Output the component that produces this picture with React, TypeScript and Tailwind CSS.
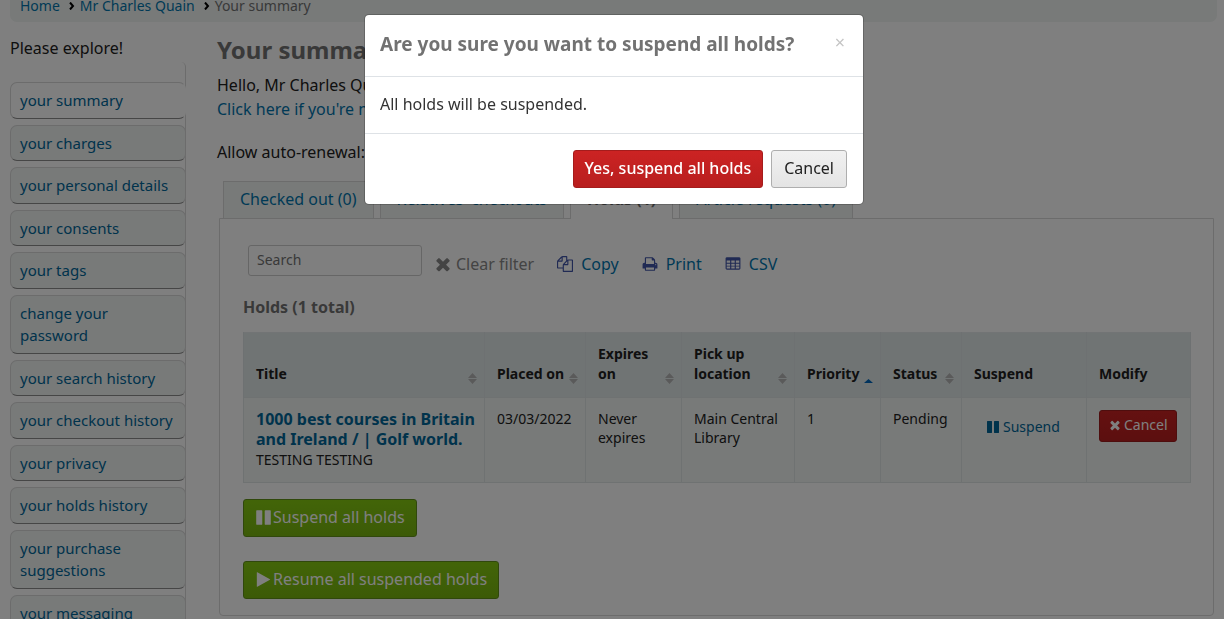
import { FC, ReactNode } from 'react';

interface IconProps {
  path: string;
  className: string;
}

const iconPaths = {
  times: 'M1490 1322q0 40-28 68l-136 136q-28 28-68 28t-68-28l-294-294-294 294q-28 28-68 28t-68-28l-136-136q-28-28-28-68t28-68l294-294-294-294q-28-28-28-68t28-68l136-136q28-28 68-28t68 28l294 294 294-294q28-28 68-28t68 28l136 136q28 28 28 68t-28 68l-294 294 294 294q28 28 28 68z',
  copy: 'M1696 384q40 0 68 28t28 68v1216q0 40-28 68t-68 28h-960q-40 0-68-28t-28-68v-288h-544q-40 0-68-28t-28-68v-672q0-40 20-88t48-76l408-408q28-28 76-48t88-20h416q40 0 68 28t28 68v328q68-40 128-40h416zm-544 213l-299 299h299v-299zm-640-384l-299 299h299v-299zm196 647l316-316v-416h-384v416q0 40-28 68t-68 28h-416v640h512v-256q0-40 20-88t48-76zm956 804v-1152h-384v416q0 40-28 68t-68 28h-416v640h896z',
  print: 'M448 1536h896v-256h-896v256zm0-640h896v-384h-160q-40 0-68-28t-28-68v-160h-640v640zm1152 64q0-26-19-45t-45-19-45 19-19 45 19 45 45 19 45-19 19-45zm128 0v416q0 13-9.5 22.5t-22.5 9.5h-224v160q0 40-28 68t-68 28h-960q-40 0-68-28t-28-68v-160h-224q-13 0-22.5-9.5t-9.5-22.5v-416q0-79 56.5-135.5t135.5-56.5h64v-544q0-40 28-68t68-28h672q40 0 88 20t76 48l152 152q28 28 48 76t20 88v256h64q79 0 135.5 56.5t56.5 135.5z',
  table: 'M224 128h1344q66 0 113 47t47 113v1088q0 66-47 113t-113 47h-1344q-66 0-113-47t-47-113v-1088q0-66 47-113t113-47zM192 512v256h384v-256zM704 512v256h384v-256zM1216 512v256h384v-256zM192 864v224h384v-224zM704 864v224h384v-224zM1216 864v224h384v-224zM192 1184v224h384v-224zM704 1184v224h384v-224zM1216 1184v224h384v-224z',
  pause: 'M1664 192v1408q0 26-19 45t-45 19h-512q-26 0-45-19t-19-45v-1408q0-26 19-45t45-19h512q26 0 45 19t19 45zm-896 0v1408q0 26-19 45t-45 19h-512q-26 0-45-19t-19-45v-1408q0-26 19-45t45-19h512q26 0 45 19t19 45z',
  play: 'M1576 927l-1328 738q-23 13-39.5 3t-16.5-36v-1472q0-26 16.5-36t39.5 3l1328 738q23 13 23 31t-23 31z',
};

const Icon: FC<IconProps> = ({ path, className }) => (
  <svg viewBox="0 0 1792 1792" className={className} fill="currentColor" fillRule="evenodd" aria-hidden="true">
    <path d={path} />
  </svg>
);

const menuItems = [
  'your summary',
  'your charges',
  'your personal details',
  'your consents',
  'your tags',
  'change your password',
  'your search history',
  'your checkout history',
  'your privacy',
  'your holds history',
  'your purchase suggestions',
  'your messaging',
];

const tabs = ['Checked out (0)', "Relatives' checkouts", 'Holds (1)', 'Article requests (0)'];

const columns = [
  { label: 'Title', width: 'w-[241px]', sort: 'both' },
  { label: 'Placed on', width: 'w-[101px]', sort: 'both' },
  { label: 'Expires on', width: 'w-[96px]', sort: 'both' },
  { label: 'Pick up location', width: 'w-[113px]', sort: 'both' },
  { label: 'Priority', width: 'w-[86px]', sort: 'asc' },
  { label: 'Status', width: 'w-[81px]', sort: 'both' },
  { label: 'Suspend', width: 'w-[125px]', sort: '' },
  { label: 'Modify', width: 'w-[104px]', sort: '' },
];

const Breadcrumbs: FC = () => (
  <nav aria-label="Breadcrumb" className="ml-2.5 mr-[7px] rounded-b-[7px] bg-[#f0f4f2] px-2.5 pb-2.5">
    <ol className="flex items-center text-sm leading-3">
      <li><a href="#home" className="text-[#0174ad]">Home</a></li>
      <Chevron />
      <li><a href="#patron" className="text-[#0174ad]">Mr Charles Quain</a></li>
      <Chevron />
      <li className="text-[#727272]" aria-current="page">Your summary</li>
    </ol>
  </nav>
);

const Chevron: FC = () => (
  <li aria-hidden="true" className="flex w-5 justify-center pl-1">
    <svg viewBox="0 0 6 8" className="h-2 w-1.5" fill="none" stroke="#000" strokeWidth="2">
      <path d="M1 0.5L4 4L1 7.5" />
    </svg>
  </li>
);

const Sidebar: FC = () => (
  <aside className="w-44 shrink-0">
    <p className="pt-3.5">Please explore!</p>
    <ul className="mt-0.5 flex flex-col gap-1.5 rounded-tr-[5px] border-r border-[#d8d8d8] pt-5 text-[15px] leading-normal">
      {menuItems.map((item, index) => (
        <li key={item} className="-mr-px">
          <a
            href="#menu"
            className={
              index === 0
                ? 'block rounded-[7px] border border-[#d8d8d8] border-r-white border-b-[#8c8c8c] bg-white px-[9px] py-1.5 text-[#006699]'
                : 'block rounded-[7px] border border-[#d8d8d8] border-b-[#8c8c8c] bg-[#f0f4f2] px-[9px] py-1.5 text-[#006699]'
            }
          >
            {item}
          </a>
        </li>
      ))}
    </ul>
  </aside>
);

const SortIcon: FC<{ sort: string }> = ({ sort }) => (
  <svg viewBox="0 0 9 11" className="h-[11px] w-[9px] shrink-0" aria-hidden="true">
    {sort === 'both' && <path d="M4.5 0L9 5H0zM0 6H9L4.5 11z" fill="#b4b4b4" />}
    {sort === 'asc' && <path d="M4.5 6L9 10H0z" fill="#0066bb" />}
  </svg>
);

const HoldsTable: FC = () => (
  <table className="w-full table-fixed border-collapse border border-[#e4e9ea] text-sm">
    <thead>
      <tr className="bg-[#e1e8e9]">
        {columns.map(({ label, width, sort }) => (
          <th key={label} className={`${width} border-x border-[#dde3e4] pt-[11px] pr-[7px] pb-[13px] pl-3 text-left align-bottom font-bold leading-5`}>
            <div className="flex items-end justify-between">
              <span>{label}</span>
              {sort && <SortIcon sort={sort} />}
            </div>
          </th>
        ))}
      </tr>
    </thead>
    <tbody>
      <tr className="h-[85px] bg-[#f0f4f2] align-top leading-[19px]">
        <td className="border border-[#dfe4e4] py-[11px] pl-3">
          <a href="#title" className="block text-base font-bold leading-5 text-[#006699]">
            1000 best courses in Britain and Ireland / | Golf world.
          </a>
          <span className="block leading-[22px]">TESTING TESTING</span>
        </td>
        <td className="border border-[#dfe4e4] py-[11px] pl-3">03/03/2022</td>
        <td className="border border-[#dfe4e4] py-[11px] px-3">Never expires</td>
        <td className="border border-[#dfe4e4] py-[11px] px-3">Main Central Library</td>
        <td className="border border-[#dfe4e4] py-[11px] px-3">1</td>
        <td className="border border-[#dfe4e4] py-[11px] pl-3">Pending</td>
        <td className="border border-[#dfe4e4] py-[11px] px-6">
          <button className="mt-2 flex items-center gap-[3px] leading-[19px] text-[#006699]">
            <Icon path={iconPaths.pause} className="h-3.5 w-3.5" />
            Suspend
          </button>
        </td>
        <td className="border border-[#dfe4e4] py-3 px-3">
          <button className="flex h-8 items-center gap-0.5 rounded-[3px] border border-[#9c1c1c] bg-linear-to-b from-[#c92222] to-[#b81e1e] px-2 pb-0.5 text-sm text-white">
            <Icon path={iconPaths.times} className="h-3.5 w-3.5" />
            Cancel
          </button>
        </td>
      </tr>
    </tbody>
  </table>
);

const ActionButton: FC<{ path: string; children: ReactNode }> = ({ path, children }) => (
  <button className="flex h-[38px] items-center gap-px rounded-[3px] border border-[#609118] bg-linear-to-b from-[#85ca11] to-[#78b50f] px-[11px] pb-0.5 text-white">
    <Icon path={path} className="h-[17px] w-[17px]" />
    {children}
  </button>
);

const HoldsPanel: FC = () => (
  <section className="ml-0.5 rounded-b border border-[#d8d8d8] pt-[26px] pr-6 pb-4 pl-[23px]">
    <div className="flex items-center pl-[5px]">
      <input
        type="search"
        aria-label="Search"
        placeholder="Search"
        className="h-[31px] w-[174px] rounded-[3px] border border-[#ccc] bg-white px-2 pb-0.5 text-sm placeholder:text-[#727272]"
      />
      <div className="flex items-center gap-[23px] pt-1.5 pl-[11px] leading-6 text-[#0174ad]">
        <button className="flex items-center gap-[3px] text-[#888]"><Icon path={iconPaths.times} className="h-5 w-5" />Clear filter</button>
        <button className="flex items-center gap-2"><Icon path={iconPaths.copy} className="h-4 w-4 text-[#4054a8]" />Copy</button>
        <button className="flex items-center gap-2"><Icon path={iconPaths.print} className="h-4 w-4 text-[#4054a8]" />Print</button>
        <button className="flex items-center gap-2"><Icon path={iconPaths.table} className="h-4 w-4 text-[#4054a8]" />CSV</button>
      </div>
    </div>
    <h2 className="mt-[19px] mb-[13px] font-bold leading-6 text-[#727272]">Holds (1 total)</h2>
    <HoldsTable />
    <div className="mt-4 flex flex-col items-start gap-6">
      <ActionButton path={iconPaths.pause}>Suspend all holds</ActionButton>
      <ActionButton path={iconPaths.play}>Resume all suspended holds</ActionButton>
    </div>
  </section>
);

const ConfirmModal: FC = () => (
  <div className="fixed inset-0 flex items-start justify-center bg-black/50 pt-3.5 pl-1">
    <div role="dialog" aria-modal="true" aria-labelledby="modal-title" className="w-[500px] rounded-[5px] border border-black/20 bg-white bg-clip-padding">
      <div className="flex items-start justify-between border-b border-[#dee2e6] px-[15px] pt-[15px] pb-[18px]">
        <h3 id="modal-title" className="text-[19px] font-bold leading-7 text-[#727272]">Are you sure you want to suspend all holds?</h3>
        <button aria-label="Close" className="w-4 text-center text-lg leading-6 text-[#c4c4c4]">×</button>
      </div>
      <div className="px-[15px] pt-[15px] pb-[17px] text-[#333]">All holds will be suspended.</div>
      <div className="flex justify-end gap-2 border-t border-[#dee2e6] p-4">
        <button className="h-[38px] rounded-[3px] border border-[#a51c1c] bg-linear-to-b from-[#cc2323] to-[#b81e1e] px-[11px] pb-0.5 font-medium text-white">Yes, suspend all holds</button>
        <button className="h-[38px] rounded-[3px] border border-[#aeaeae] bg-linear-to-b from-[#f1f1f1] to-[#e4e4e4] px-3 pb-0.5 text-[#222]">Cancel</button>
      </div>
    </div>
  </div>
);

const App: FC = () => (
  <div className="h-screen overflow-hidden bg-white font-['Noto_Sans',sans-serif] text-base leading-6 text-[#202020]">
    <Breadcrumbs />
    <div className="flex gap-[31px] px-2.5">
      <Sidebar />
      <main className="min-w-0 flex-1">
        <h1 className="pt-3 text-2xl font-bold leading-8 text-[#727272]">Your summary</h1>
        <p className="mt-[7px]">Hello, Mr Charles Quain</p>
        <p><a href="#not-me" className="text-[#0174ad]">Click here if you're not Mr Charles Quain</a></p>
        <p className="mt-[19px]">Allow auto-renewal:</p>
        <div role="tablist" className="mt-[17px] flex items-end gap-1.5 pl-1.5">
          {tabs.map((tab) => (
            <button
              key={tab}
              role="tab"
              aria-selected={tab === 'Holds (1)'}
              className={
                tab === 'Holds (1)'
                  ? 'relative -mb-px h-[38px] border border-b-0 border-[#d8d8d8] bg-white px-4 pb-[3px] font-bold text-[#727272]'
                  : 'h-[37px] border border-b-0 border-[#d8d8d8] bg-[#f0f4f2] px-4 pb-0.5 text-[#0174ad]'
              }
            >
              {tab}
            </button>
          ))}
        </div>
        <HoldsPanel />
      </main>
    </div>
    <ConfirmModal />
  </div>
);

export default App;
